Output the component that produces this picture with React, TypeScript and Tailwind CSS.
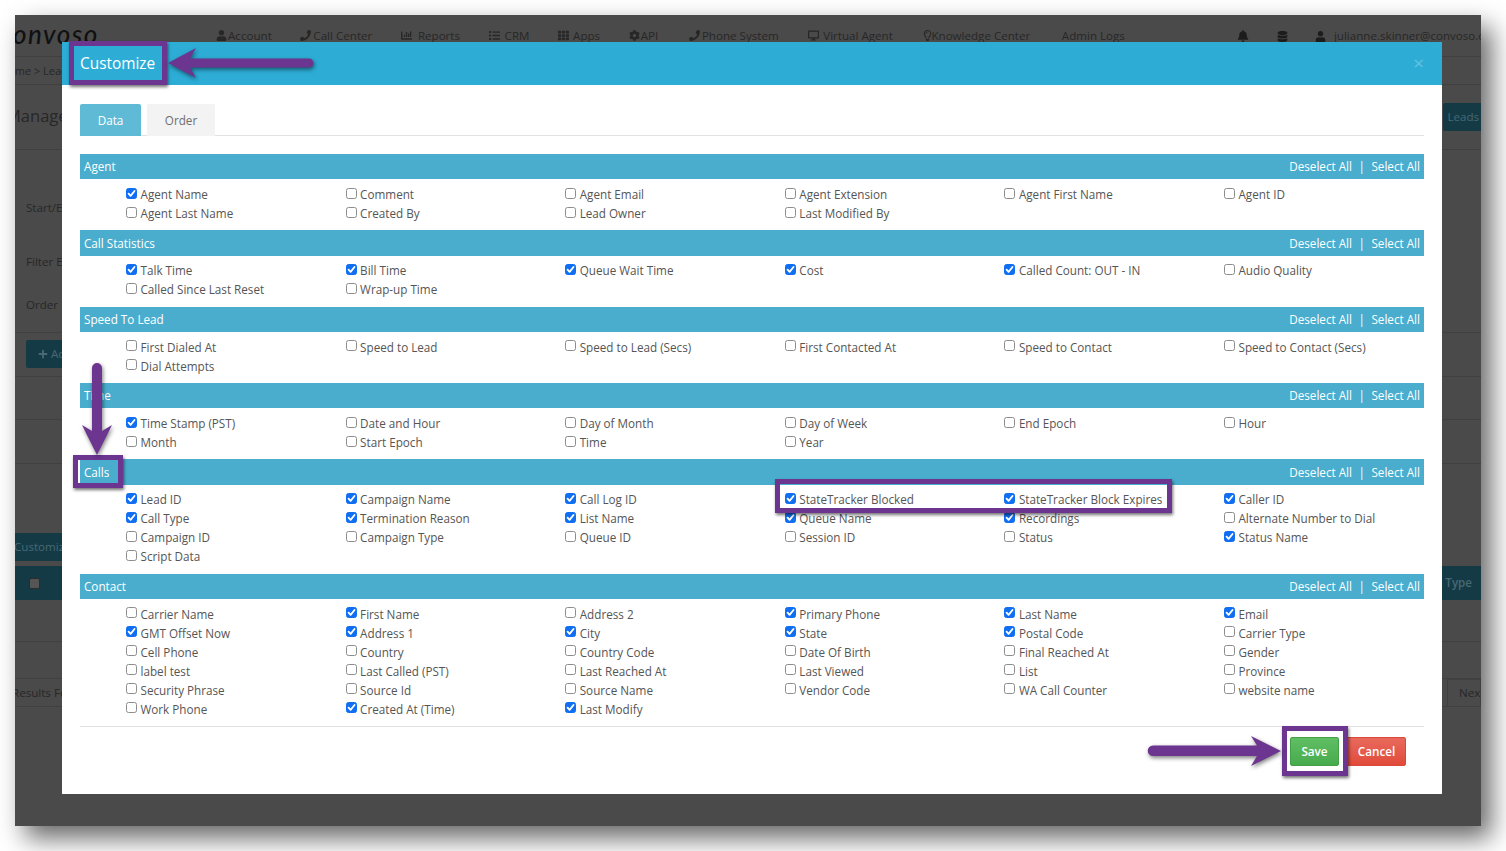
import { FaUser, FaPhone, FaChartBar, FaList, FaTh, FaCog, FaDesktop, FaRegLightbulb, FaBell, FaDatabase, FaPlus } from "react-icons/fa"

const sections = [
  {
    title: "Agent",
    items: ["Agent Name*", "Comment", "Agent Email", "Agent Extension", "Agent First Name", "Agent ID", "Agent Last Name", "Created By", "Lead Owner", "Last Modified By"],
  },
  {
    title: "Call Statistics",
    items: ["Talk Time*", "Bill Time*", "Queue Wait Time*", "Cost*", "Called Count: OUT - IN*", "Audio Quality", "Called Since Last Reset", "Wrap-up Time"],
  },
  {
    title: "Speed To Lead",
    items: ["First Dialed At", "Speed to Lead", "Speed to Lead (Secs)", "First Contacted At", "Speed to Contact", "Speed to Contact (Secs)", "Dial Attempts"],
  },
  {
    title: "Time",
    items: ["Time Stamp (PST)*", "Date and Hour", "Day of Month", "Day of Week", "End Epoch", "Hour", "Month", "Start Epoch", "Time", "Year"],
  },
  {
    title: "Calls",
    items: [
      "Lead ID*", "Campaign Name*", "Call Log ID*", "StateTracker Blocked*", "StateTracker Block Expires*", "Caller ID*",
      "Call Type*", "Termination Reason*", "List Name*", "Queue Name*", "Recordings*", "Alternate Number to Dial",
      "Campaign ID", "Campaign Type", "Queue ID", "Session ID", "Status", "Status Name*",
      "Script Data",
    ],
  },
  {
    title: "Contact",
    items: [
      "Carrier Name", "First Name*", "Address 2", "Primary Phone*", "Last Name*", "Email*",
      "GMT Offset Now*", "Address 1*", "City*", "State*", "Postal Code*", "Carrier Type",
      "Cell Phone", "Country", "Country Code", "Date Of Birth", "Final Reached At", "Gender",
      "label test", "Last Called (PST)", "Last Reached At", "Last Viewed", "List", "Province",
      "Security Phrase", "Source Id", "Source Name", "Vendor Code", "WA Call Counter", "website name",
      "Work Phone", "Created At (Time)*", "Last Modify*",
    ],
  },
]

// w is the slot the icon sits in, they differ per icon in the original menu
const navItems = [
  { icon: FaUser, label: "Account", w: "w-[12px]", extra: "" },
  { icon: FaPhone, label: "Call Center", w: "w-[13px]", extra: "" },
  { icon: FaChartBar, label: "Reports", w: "w-[17px]", extra: "" },
  { icon: FaList, label: "CRM", w: "w-[16px]", extra: "" },
  { icon: FaTh, label: "Apps", w: "w-[15px]", extra: "" },
  { icon: FaCog, label: "API", w: "w-[12px]", extra: "mr-[2px]" },
  { icon: FaPhone, label: "Phone System", w: "w-[13px]", extra: "mr-[1px]" },
  { icon: FaDesktop, label: "Virtual Agent", w: "w-[15px]", extra: "mr-[1px]" },
  { icon: FaRegLightbulb, label: "Knowledge Center", w: "w-[9px]", extra: "mr-[3px]" },
]

function Field({ item }: { item: string }) {
  const checked = item.endsWith("*")
  const label = checked ? item.slice(0, -1) : item
  return (
    <label className="flex h-[19px] items-center whitespace-nowrap text-[#555]">
      <span className="relative mr-[3.5px] -mt-[3px] flex h-[11px] w-[11px] shrink-0 items-center justify-center">
        <input
          type="checkbox"
          readOnly
          checked={checked}
          className="h-[11px] w-[11px] appearance-none rounded-[2.5px] border border-[#8d8d8d] bg-white checked:border-[#0f6ef2] checked:bg-[#0f6ef2]"
        />
        {checked && (
          <svg viewBox="0 0 12 12" className="pointer-events-none absolute inset-0 h-[11px] w-[11px]">
            <path d="M2.8 6.2 5 8.6 9.3 3.3" fill="none" stroke="#fff" strokeWidth="2" strokeLinecap="round" strokeLinejoin="round" />
          </svg>
        )}
      </span>
      {label}
    </label>
  )
}

function Section({ title, items }: { title: string; items: string[] }) {
  return (
    <section>
      <div className="flex h-[25.33px] items-center justify-between bg-[#4aadce] px-[4px] pt-[1px] font-medium text-white">
        <span>{title}</span>
        <span className="flex items-center">
          <a>Deselect All</a>
          <span className="mx-[6.5px]">|</span>
          <a>Select All</a>
        </span>
      </div>
      <div className="grid grid-cols-[repeat(6,219.6px)] pl-[46px] pb-[7px] pt-[6px]">
        {items.map((item) => (
          <Field key={item} item={item} />
        ))}
      </div>
    </section>
  )
}

function BackPage() {
  return (
    <div className="flex h-full flex-col text-[11.6px] text-[#272727]">
      <header className="flex h-[42px] shrink-0 items-center whitespace-nowrap border-b border-[#404040] pt-[1px]">
        <div className="-ml-[15px] -mt-[5px] w-[216px] shrink-0 font-['Lato',sans-serif] text-[26px] font-medium italic leading-none tracking-[1.5px] text-[#111]">
          convoso
        </div>
        <nav className="flex shrink-0 items-center gap-[28.6px]">
          {navItems.map(({ icon: Icon, label, w, extra }) => (
            <span key={label} className={`flex items-center ${extra}`}>
              <span className={`${w} shrink-0`}>
                <Icon className="text-[11px]" />
              </span>
              {label}
            </span>
          ))}
          <span>Admin Logs</span>
        </nav>
        <FaBell className="ml-[112px] shrink-0 text-[12px] text-[#1c1c1c]" />
        <FaDatabase className="ml-[28px] shrink-0 text-[11px] text-[#1c1c1c]" />
        <FaUser className="ml-[27px] shrink-0 text-[11px] text-[#1c1c1c]" />
        <span className="ml-[8px]">julianne.skinner@convoso.com</span>
      </header>
      <div className="flex h-[28px] shrink-0 items-center overflow-hidden whitespace-nowrap border-b border-[#404040] pt-[1px] text-[11px]">
        <span className="-ml-[15px]">Home &gt; Leads</span>
      </div>
      <div className="flex h-[65px] shrink-0 items-center justify-between border-b border-[#404040]">
        <span className="-ml-[9px] -mt-[2px] text-[16.5px]">Manage</span>
        <span className="flex h-[28px] w-[38px] items-center justify-end overflow-hidden whitespace-nowrap rounded-l-[2px] bg-[#143a46] pr-[2px] text-[#486974]">
          Leads
        </span>
      </div>
      <div className="flex h-[183px] shrink-0 flex-col items-start border-b border-[#404040] pl-[11px]">
        <span className="mt-[49px]">Start/E</span>
        <span className="mt-[37px]">Filter E</span>
        <span className="mt-[25px]">Order</span>
      </div>
      <div className="flex h-[44px] shrink-0 items-start border-b border-[#404040] pl-[11px] pt-[7px]">
        <span className="flex h-[28px] w-[60px] items-center gap-[3px] rounded-[2px] bg-[#143a46] pl-[12px] text-[#486974]">
          <FaPlus className="text-[10px]" />
          Add
        </span>
      </div>
      <div className="h-[43px] shrink-0 border-b border-[#404040]" />
      <div className="h-[44px] shrink-0 border-b border-[#404040]" />
      <div className="mt-[69px] flex h-[28px] w-[60px] shrink-0 items-center overflow-hidden whitespace-nowrap bg-[#143a46] text-[#486974]">
        <span className="-ml-[1px]">Customiz</span>
      </div>
      <div className="mt-[5px] flex h-[34px] shrink-0 items-center justify-between bg-[#143a46] pl-[14px] pr-[9px] font-semibold text-[#486974]">
        <span className="h-[11px] w-[11px] rounded-[2px] border border-[#2c2c2c] bg-[#555]" />
        <span>Type</span>
      </div>
      <div className="h-[42px] shrink-0 border-b border-[#404040]" />
      <div className="h-[37px] shrink-0 border-b border-[#404040]" />
      <div className="flex h-[28px] shrink-0 items-center justify-between border-b border-[#404040]">
        <span className="-ml-[3px] whitespace-nowrap">Results Fo</span>
        <span className="flex h-[28px] w-[34px] items-center overflow-hidden border border-[#404040] pl-[11px]">Next</span>
      </div>
    </div>
  )
}

function Modal() {
  return (
    <div className="absolute left-[47px] top-[27px] flex h-[752px] w-[1380px] flex-col bg-white text-[11.7px]">
      <div className="flex h-[43px] shrink-0 items-center justify-between bg-[#2dadd6] pl-[18px] pr-[18px] text-white">
        <span className="text-[15.4px] font-medium">Customize</span>
        <span className="text-[19px] leading-none text-[#63c3e0]">×</span>
      </div>
      <div className="flex flex-1 flex-col px-[18px]">
        <div className="mt-[19px] flex h-[32px] shrink-0 gap-[6px] border-b border-[#e2e2e2]">
          <span className="flex h-[32px] w-[61px] items-center justify-center rounded-t-[2px] bg-[#5fbad6] pt-[2px] text-white">Data</span>
          <span className="flex h-[32px] w-[68px] items-center justify-center rounded-t-[2px] bg-[#f3f3f3] pt-[2px] text-[#6f6f6f]">Order</span>
        </div>
        <div className="mt-[18px]">
          {sections.map((s) => (
            <Section key={s.title} title={s.title} items={s.items} />
          ))}
        </div>
        <div className="flex flex-1 items-start justify-end gap-[4px] border-t border-[#e2e2e2] pr-[18px] pt-[10px]">
          <button className="h-[29px] w-[49px] rounded-[2px] border border-[#43a047] bg-linear-to-b from-[#60be64] to-[#47ab4c] pt-[1px] font-semibold text-white">
            Save
          </button>
          <button className="h-[29px] w-[63px] rounded-[2px] border border-[#d9483a] bg-linear-to-b from-[#e8695c] to-[#e14b3b] pl-[4px] pt-[1px] font-semibold text-white">
            Cancel
          </button>
        </div>
      </div>
    </div>
  )
}

function Annotations() {
  const box = "absolute border-[5px] border-[#6b3590] shadow-[1px_2px_3px_rgba(0,0,0,0.55)]"
  const arrow = "absolute drop-shadow-[1px_2px_2px_rgba(0,0,0,0.5)]"
  return (
    <>
      <div className={`${box} left-[54px] top-[26px] h-[44px] w-[98px]`} />
      <div className={`${box} left-[58px] top-[440px] h-[33px] w-[50px]`} />
      <div className={`${box} left-[760px] top-[464px] h-[34px] w-[397px]`} />
      <div className={`${box} left-[1267px] top-[711px] h-[50px] w-[66px]`} />

      {/* left arrow to the title */}
      <svg viewBox="0 0 146 32" className={`${arrow} left-[153px] top-[32px] h-[32px] w-[146px]`}>
        <path d="M0 16 28 1 22 11.500 141 11.500a4.500 4.500 0 0 1 0 9L22 20.500 28 31Z" fill="#6b3590" />
      </svg>
      {/* down arrow to Calls */}
      <svg viewBox="0 0 32 93" className={`${arrow} left-[66px] top-[348px] h-[93px] w-[32px]`}>
        <path d="M16 92 1 62 11 68 11 5a5 5 0 0 1 10 0L21 68 31 62Z" fill="#6b3590" />
      </svg>
      {/* right arrow to Save */}
      <svg viewBox="0 0 135 32" className={`${arrow} left-[1132px] top-[720px] h-[32px] w-[135px]`}>
        <path d="M134 16 104 1 110 10.500 6 10.500a5 5 0 0 0 0 10.500L110 21 104 31Z" fill="#6b3590" />
      </svg>
    </>
  )
}

export default function App() {
  return (
    <div className="h-[851px] w-[1506px] overflow-hidden bg-white p-[15px] font-['Open_Sans',sans-serif]">
      <div className="h-[811px] w-[1466px] shadow-[10px_12px_24px_rgba(0,0,0,0.6)]">
        <div className="relative h-full w-full overflow-hidden bg-[#4a4a4a]">
          <BackPage />
          <Modal />
          <Annotations />
        </div>
      </div>
    </div>
  )
}
